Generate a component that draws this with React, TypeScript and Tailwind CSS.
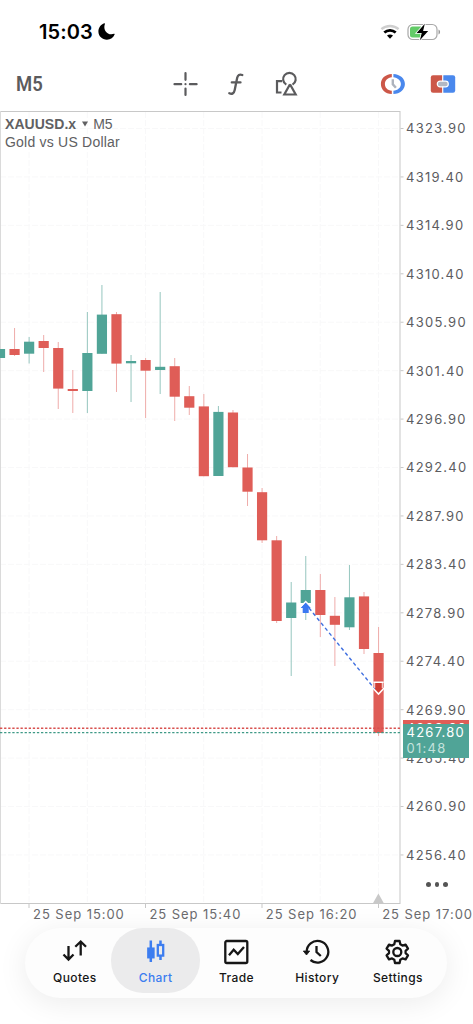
import React from "react";

type Candle = [number, number, number, number, "g" | "r"];

// wick top, body top, body bottom, wick bottom, direction
const candles: Candle[] = [
  [349, 349, 358, 358, "g"],
  [328, 349, 355, 356, "r"],
  [337, 341.7, 353.7, 363.5, "g"],
  [335, 341, 348, 372, "r"],
  [342, 348, 388.6, 409, "r"],
  [370, 389, 391, 413, "r"],
  [312, 353, 391, 413, "g"],
  [285, 314.6, 353.8, 353.8, "g"],
  [312, 314.2, 363.6, 392, "r"],
  [355, 361, 363.3, 402, "g"],
  [358, 360, 370.7, 418, "r"],
  [292, 366.8, 370, 394, "g"],
  [358, 366.2, 396.7, 421, "r"],
  [386, 396.2, 407.7, 415, "r"],
  [394, 406.4, 476.2, 476.2, "r"],
  [406, 411.9, 476, 476, "g"],
  [410, 412.5, 467.2, 467.2, "r"],
  [454, 467.5, 491.7, 506, "r"],
  [488, 492.2, 540.3, 543, "r"],
  [536, 540.3, 621, 623, "r"],
  [582, 602.5, 618, 676, "g"],
  [556, 590, 603, 620, "g"],
  [574, 590, 615, 637, "r"],
  [597, 615.8, 624.8, 666, "r"],
  [565, 597.3, 627.3, 630, "g"],
  [592, 596.4, 649, 654, "r"],
  [627, 653, 733, 736, "r"],
];

const prices = [
  "4323.90", "4319.40", "4314.90", "4310.40", "4305.90", "4301.40", "4296.90", "4292.40",
  "4287.90", "4283.40", "4278.90", "4274.40", "4269.90", "4265.40", "4260.90", "4256.40",
];

const STEP = 48.43;
const verticals = [29, 87.3, 145.5, 203.7, 262, 320.2, 378.5];

function Plot() {
  return (
    <svg className="block h-[798px] w-[406px] shrink-0" viewBox="0 111 406 798">
      <g stroke="#f8f8f9" strokeWidth="1" strokeDasharray="6 2">
        {verticals.map((x) => (
          <line key={x} x1={x} x2={x} y1="112" y2="903" />
        ))}
        {prices.map((p, i) => (
          <line key={p} x1="0" x2="400" y1={128.5 + i * STEP} y2={128.5 + i * STEP} />
        ))}
      </g>
      <g fill="#c8c8c8">
        <rect x="0" y="111" width="400" height="1" />
        <rect x="399.500" y="111" width="1" height="793" />
        <rect x="0" y="903" width="400" height="1" />
        <rect x="0" y="111" width="1" height="793" fill="#dadada" />
        {prices.map((p, i) => (
          <rect key={p} x="400.500" y={128 + i * STEP} width="3" height="1" />
        ))}
        {[29, 145.5, 262, 378.5].map((x) => (
          <rect key={x} x={x - 0.5} y="904" width="1" height="4" />
        ))}
        <path d="M378.4 893.5L384 903.5H372.8Z" />
      </g>
      {candles.map(([t, bt, bb, b, d], i) => {
        const x = i * 14.56;
        return (
          <g key={i}>
            <rect x={x - 0.5} y={t} width="1" height={b - t} fill={d === "g" ? "#96c6bf" : "#efacaa"} />
            <rect x={x - 5.1} y={bt} width="10.2" height={bb - bt} fill={d === "g" ? "#50a497" : "#df5d57"} />
          </g>
        );
      })}
      <line x1="0" x2="400" y1="728.3" y2="728.3" stroke="#d8514f" strokeWidth="1.4" strokeDasharray="2.3 1.8" />
      <line x1="0" x2="400" y1="732.6" y2="732.6" stroke="#3f9a87" strokeWidth="1.4" strokeDasharray="2.3 1.8" />
      <line x1="309" y1="608" x2="378" y2="693" stroke="#3f6fe0" strokeWidth="1.4" strokeDasharray="3.6 2.8" />
      <path d="M305.7 602L311 608H308.700V613H302.700V608H300.500Z" fill="#3a78f2" />
      <path d="M299.900 607.500L305.7 601.500L311.500 607.500" fill="none" stroke="#fff" strokeWidth="1.4" />
      <path d="M375.2 683H381.8V689H384L378.5 694.5L373 689H375.2Z" fill="#cf3d33" />
      <path d="M372.800 688L378.5 694L384.200 688M373.4 682.3H383.6" fill="none" stroke="#fff" strokeWidth="1.6" />
      <path d="M374.700 682.3V688M382.3 682.3V688" fill="none" stroke="#fff" strokeWidth=".8" />
    </svg>
  );
}

function PriceAxis() {
  return (
    <div className="relative h-[798px] flex-1">
      <div className="-mt-[6px] flex flex-col">
        {prices.map((p) => (
          <div key={p} className="flex h-[48.43px] items-center text-[13px] tracking-[1.25px] text-[#5c5c5f]">
            {p}
          </div>
        ))}
      </div>
      <div className="absolute top-[609px] -left-[3px] h-[38px] w-[66px] overflow-hidden bg-[#df5d57] pl-[3.5px] text-[13px] leading-[16px] tracking-[1.25px] text-white">
        <span className="block">4268.20</span>
        <div className="absolute inset-x-0 top-[4px] h-[34px] bg-[#50a497] pl-[3.5px]">
          <div>4267.80</div>
          <div className="text-[#c5e2dd]">01:48</div>
        </div>
      </div>
      <div className="absolute top-[771px] left-[20px] flex gap-[4px]">
        <i className="size-[4.5px] rounded-full bg-[#555]" />
        <i className="size-[4.5px] rounded-full bg-[#555]" />
        <i className="size-[4.5px] rounded-full bg-[#555]" />
      </div>
    </div>
  );
}

function StatusBar() {
  return (
    <div className="flex h-[62px] items-center justify-between pt-px pr-[32px] pl-[39px] text-black">
      <div className="flex items-center gap-[5px]">
        <span className="text-[20px] font-semibold tracking-[0.1px]">15:03</span>
        <svg className="size-[17px]" viewBox="0 0 17 17">
          <path d="M6.3.3C3 1.4.4 4.500.4 8.500C.4 13.200 4.200 16.700 8.900 16.700C12.600 16.700 15.500 14.700 16.700 11.300C16.800 10.800 16.400 10.600 16 10.800C10.200 13 4.500 7.500 6.900.9C7 .4 6.800.1 6.300.3Z" fill="#000" />
        </svg>
      </div>
      <div className="flex items-center gap-[7px]">
        <svg className="h-[16px] w-[20px]" viewBox="0 0 20 16">
          <path d="M1.400 5.200C6.200.9 13.800.9 18.600 5.200" fill="none" stroke="#cfcfcf" strokeWidth="2.400" />
          <path d="M4.300 8.500C7.500 5.600 12.500 5.600 15.700 8.500" fill="none" stroke="#000" strokeWidth="2.700" />
          <path d="M7 11.600C8.700 10.200 11.300 10.200 13 11.600L10 14.700Z" fill="#000" />
        </svg>
        <svg className="h-[18px] w-[34px]" viewBox="0 0 34 18">
          <rect x="1" y="1.500" width="29" height="15" rx="4.800" fill="#fff" stroke="#a8a8a8" strokeWidth="1.200" />
          <path d="M5.500 3.500H14V14.500H5.500A2.500 2.500 0 0 1 3 12V6A2.500 2.500 0 0 1 5.500 3.500Z" fill="#62cb67" />
          <path d="M31.500 6.500C33.600 7.300 33.600 10.700 31.500 11.500Z" fill="#999" />
          <path d="M17.800.8L9.600 10H14.700L12.900 17.200L21.200 8H16.100Z" fill="#000" stroke="#fff" strokeWidth="1.600" paintOrder="stroke" />
        </svg>
      </div>
    </div>
  );
}

function Toolbar() {
  return (
    <div className="flex h-[49px] items-center pb-[5px] pl-[16px] text-[#5b5b5d]">
      <span className="w-[157px]">
        <span className="inline-block origin-left scale-x-[0.88] font-[Roboto] text-[21px] leading-[26px] font-semibold">M5</span>
      </span>
      <svg className="h-[26px] w-[26px]" viewBox="0 0 26 26" fill="none" stroke="currentColor" strokeWidth="2.200" strokeLinecap="round">
        <path d="M1.500 13.200H8.200M16.900 13.200H23.600M12.500 2V8.800M12.500 17.500V24" />
        <circle cx="12.500" cy="13.200" r="1.100" fill="currentColor" stroke="none" />
      </svg>
      <svg className="ml-[28px] h-[26px] w-[18px]" viewBox="0 0 18 26" fill="none" stroke="currentColor" strokeWidth="2.300" strokeLinecap="round">
        <path d="M15.300 4C12.500 2.800 10.800 4 10.200 6.800L7.700 19C7 22.500 5 23.400 2.300 22.300M4.800 11.400H13.500" />
      </svg>
      <svg className="ml-[28px] h-[26px] w-[26px]" viewBox="0 0 26 26" fill="none" stroke="currentColor" strokeWidth="2.200">
        <path d="M9 10.200H4V21.500H8.500M13.300 13.600A6.300 6.300 0 1 1 19.500 13.600M17 13.200L11.300 23.500H22.700L17 13.200" />
      </svg>
      <svg className="ml-[81px] h-[24px] w-[26px]" viewBox="0 0 26 24" fill="none">
        <path d="M11.800 1.900C5 2.200.9 6.500.9 12S5 21.800 11.800 22.100V18.800C7.500 18.300 4.900 15.700 4.900 12S7.500 5.700 11.800 5.200Z" fill="#cc5748" />
        <path d="M13.400 1.900C20.200 2.200 24.900 6.500 24.900 12S20.200 21.800 13.400 22.100V18.800C17.700 18.300 20.900 15.700 20.900 12S17.700 5.700 13.400 5.200Z" fill="#4a88ed" />
        <path d="M12.800 7.200V12.200L15.900 15.800" stroke="#adb3bd" strokeWidth="2.400" />
      </svg>
      <svg className="ml-[24px] h-[20px] w-[26px]" viewBox="0 0 26 20">
        <path d="M3 1.200H12.100V18.800H3Q.8 18.800.8 16.600V3.400Q.8 1.200 3 1.200Z" fill="#cc5748" />
        <path d="M13.300 1.200H23Q25.200 1.200 25.200 3.400V16.600Q25.200 18.800 23 18.800H13.300Z" fill="#4a88ed" />
        <rect x="7.300" y="7.200" width="11" height="5.600" rx="2.800" fill="#b3b8c4" stroke="#fff" strokeWidth="1.200" />
      </svg>
    </div>
  );
}

const icons: Record<string, React.ReactNode> = {
  Quotes: <path d="M8.500 8V21M3.500 16.500L8.500 21.500L13.500 16.500M20.700 17.500V3.500M15.300 8.800L20.700 3.500L26 8.800" />,
  Chart: (
    <>
      <path d="M9.800 2.500V24M19.500 2.500V22" strokeWidth="2.500" />
      <rect x="7.300" y="10.600" width="5.200" height="8.700" fill="currentColor" />
      <rect x="16.800" y="7" width="5.400" height="10.600" fill="#ebebec" />
    </>
  ),
  Trade: (
    <>
      <rect x="3.300" y="3" width="22" height="22" rx="1.500" />
      <path d="M7 17.300L11.700 11.800L15.800 16L22 9" />
    </>
  ),
  History: (
    <>
      <path d="M3.700 14A10.800 10.800 0 1 1 7.500 22M13.500 8V14L17.800 18" />
      <path d="M.3 13H6.700L3.500 17Z" fill="currentColor" strokeWidth=".8" />
    </>
  ),
  Settings: (
    <>
      <path d="M12 3H16.600L17.300 6.300L19.500 7.600L22.600 6.600L25 10.700L22.600 12.900V15.100L25 17.300L22.600 21.400L19.500 20.400L17.300 21.700L16.600 25H12L11.300 21.700L9.100 20.400L6 21.400L3.600 17.300L6 15.100V12.900L3.600 10.700L6 6.600L9.100 7.600L11.300 6.300Z" strokeLinejoin="round" />
      <circle cx="14.300" cy="14" r="4" />
    </>
  ),
};

function TabBar() {
  return (
    <nav className="ml-[25px] flex h-[70px] w-[422px] rounded-[35px] bg-[#fdfdfd] px-[9px] shadow-[0_5px_30px_rgba(0,0,0,0.08)]">
      {Object.keys(icons).map((name) => (
        <button
          key={name}
          className={
            name === "Chart"
              ? "-mx-[4px] flex h-[65px] w-[89px] shrink-0 flex-col items-center rounded-[32px] bg-[#ebebec] pt-[10px] text-[#3c7df0]"
              : "flex h-[65px] w-[80.7px] shrink-0 flex-col items-center pt-[10px] text-[#161616]"
          }
        >
          <svg className="h-[28px] w-[28px]" viewBox="0 0 28 28" fill="none" stroke="currentColor" strokeWidth="2.300">
            {icons[name]}
          </svg>
          <span className="mt-[4px] pl-[1px] text-[12px] leading-[16px] font-medium tracking-[0.4px]">{name}</span>
        </button>
      ))}
    </nav>
  );
}

export default function App() {
  return (
    <main className="h-[1024px] w-[473px] overflow-hidden bg-white font-['Inter',sans-serif]">
      <StatusBar />
      <Toolbar />
      <section className="relative flex h-[793px]">
        <Plot />
        <PriceAxis />
        <header className="absolute top-[4px] left-[5px] font-['Liberation_Sans',sans-serif] text-[14px] leading-[18px] text-[#606062]">
          <div className="flex items-center">
            <b className="tracking-[0.05px]">XAUUSD.x</b>
            <svg className="mr-[5px] ml-[6px] size-[6px]" viewBox="0 0 6 6">
              <path d="M0 .5H6L3 5.500Z" fill="currentColor" />
            </svg>
            M5
          </div>
          <div className="tracking-[0.22px]">Gold vs US Dollar</div>
        </header>
      </section>
      <div className="flex h-[24px] pl-[33px] text-[13px] leading-[20px] tracking-[0.95px] whitespace-nowrap text-[#6a6a6d]">
        <span className="w-[116.4px] shrink-0">25 Sep 15:00</span>
        <span className="w-[116.4px] shrink-0">25 Sep 15:40</span>
        <span className="w-[116.4px] shrink-0">25 Sep 16:20</span>
        <span className="shrink-0">25 Sep 17:00</span>
      </div>
      <TabBar />
    </main>
  );
}
